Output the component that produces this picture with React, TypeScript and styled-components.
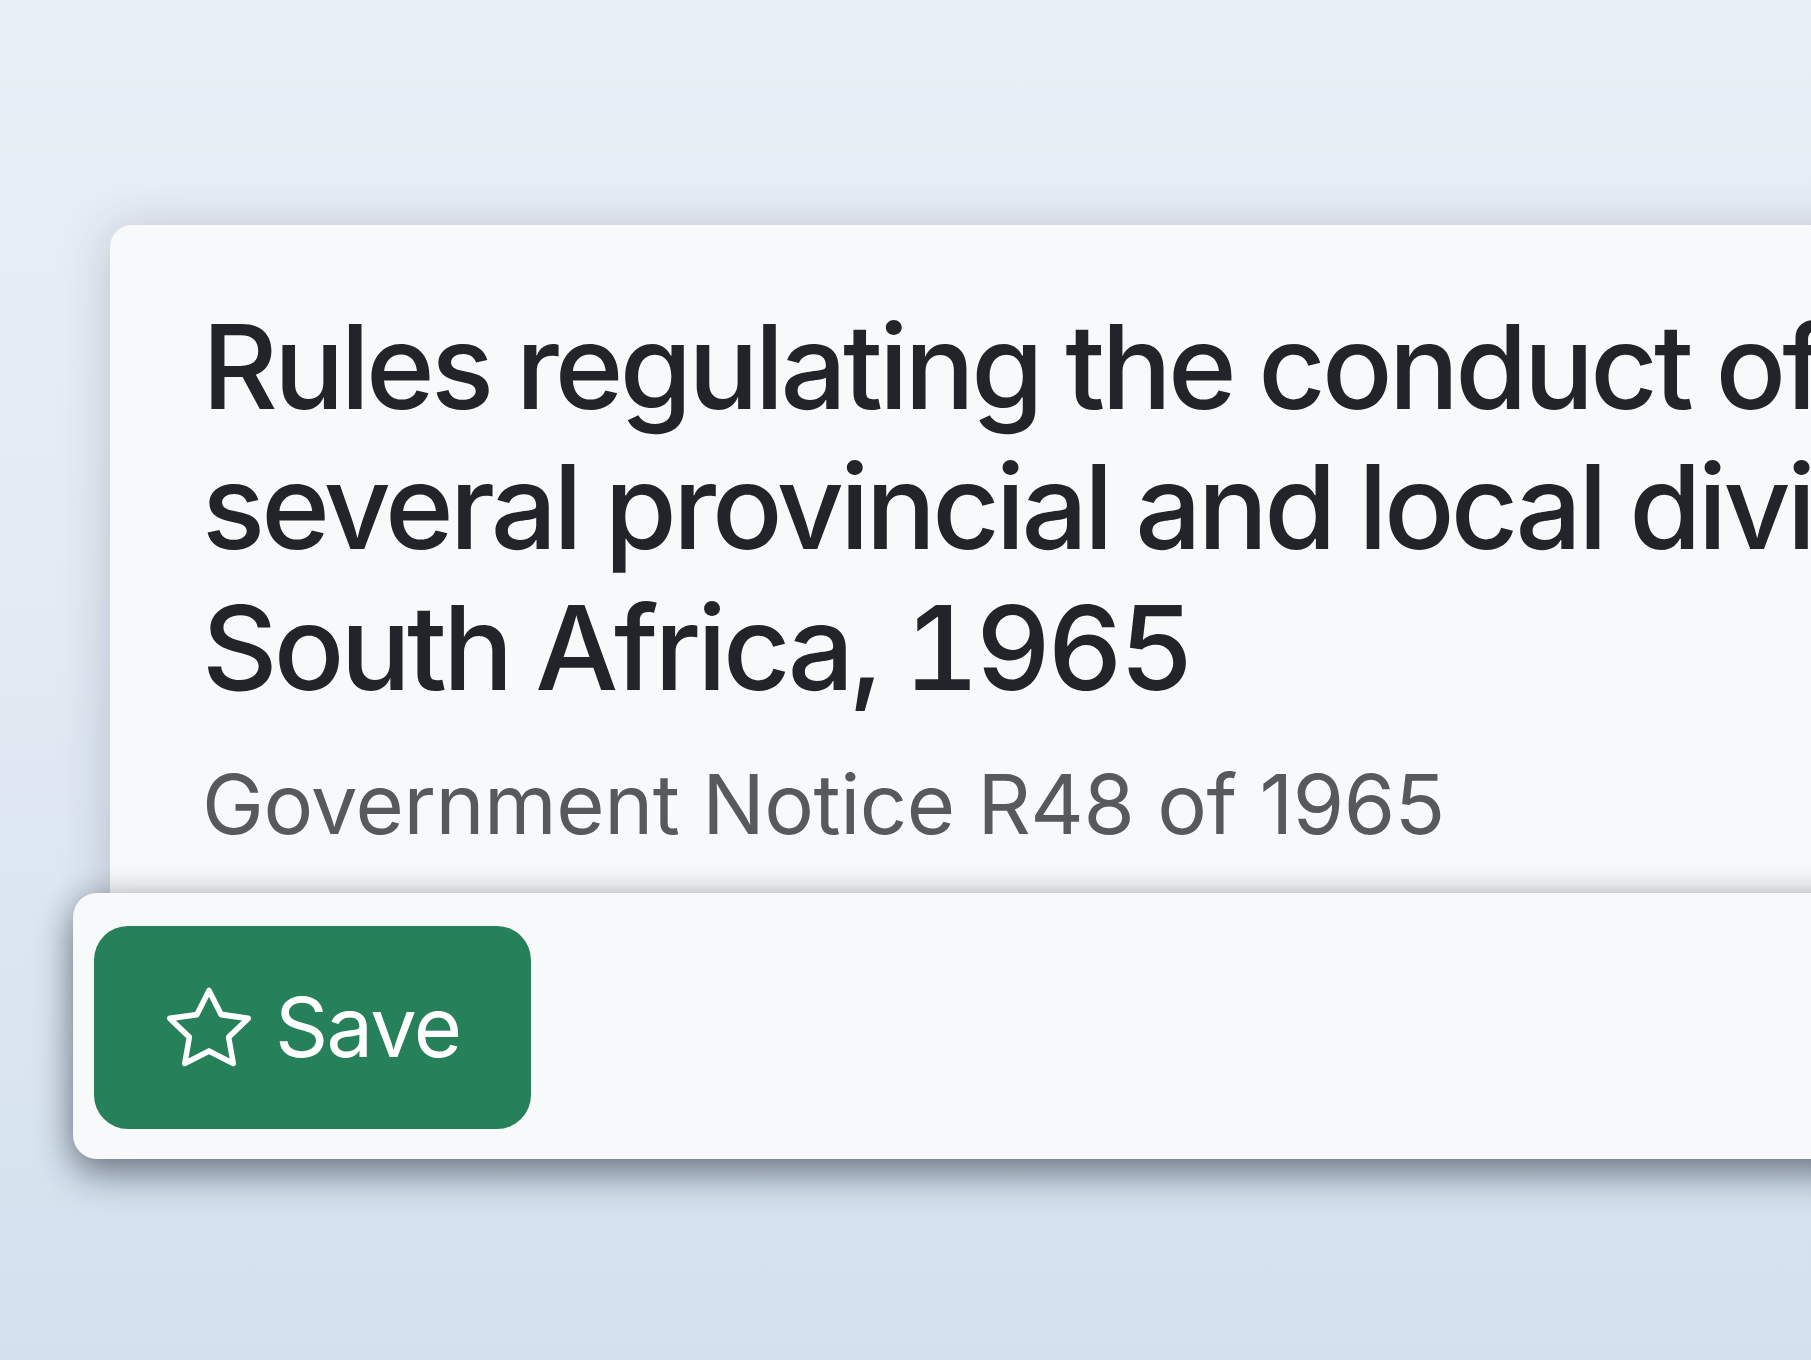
import React from "react";
import styled, { createGlobalStyle } from "styled-components";
import { BsStar } from "react-icons/bs";

const Global = createGlobalStyle`
  html, body { margin: 0; padding: 0; }
  body {
    width: 1811px;
    height: 1360px;
    overflow: hidden;
    background: linear-gradient(180deg, #e9eff7 0%, #e4ebf4 40%, #d3e1ee 100%);
    font-family: Inter, "Noto Sans", sans-serif;
  }
`;

const Page = styled.main`
  padding: 225px 0 0 110px;
  display: flex;
  flex-direction: column;
  align-items: flex-start;
`;

const Card = styled.section`
  width: 3300px;
  box-sizing: border-box;
  background: #f8f9fa;
  border-radius: 22px;
  padding: 72px 92px 54px;
  box-shadow: 0 4px 50px rgba(30, 45, 70, 0.22);
`;

const Title = styled.h1`
  margin: 0 0 24px;
  font-size: 117px;
  line-height: 1.2;
  font-weight: 500;
  letter-spacing: -0.033em;
  word-spacing: -2px;
  font-feature-settings: "tnum" 1;
  color: #212529;
`;

const TitleLine = styled.span`
  display: block;
  white-space: nowrap;
`;

const Subtitle = styled.p`
  margin: 0;
  font-size: 83px;
  line-height: 1.5;
  font-weight: 400;
  letter-spacing: -0.006em;
  color: #58595d;
  white-space: nowrap;
`;

const ActionBar = styled.div`
  position: relative;
  z-index: 1;
  width: 3400px;
  box-sizing: border-box;
  margin: -28px 0 0 -37px;
  padding: 33px 21px 30px;
  background: #f8f9fa;
  border-radius: 24px;
  box-shadow: 0 0 30px rgba(0, 0, 0, 0.16), 0 16px 38px rgba(20, 30, 45, 0.48);
  display: flex;
  align-items: center;
`;

const SaveButton = styled.button`
  display: inline-flex;
  align-items: center;
  gap: 24px;
  height: 203px;
  box-sizing: border-box;
  padding: 0 71px 0 73px;
  border: none;
  border-radius: 34px;
  background: #268059;
  color: #ffffff;
  font-family: Inter, "Noto Sans", sans-serif;
  font-size: 83px;
  line-height: 1.5;
  font-weight: 400;
  letter-spacing: -0.02em;
  cursor: pointer;

  svg {
    width: 84px;
    height: 84px;
    flex-shrink: 0;
  }
`;

export default function App() {
  return (
    <>
      <Global />
      <Page>
        <Card>
          <Title>
            <TitleLine>Rules regulating the conduct of the proceedings of the</TitleLine>
            <TitleLine>several provincial and local divisions of the Supreme Court of</TitleLine>
            <TitleLine>South Africa, 1965</TitleLine>
          </Title>
          <Subtitle>Government Notice R48 of 1965</Subtitle>
        </Card>
        <ActionBar>
          <SaveButton type="button">
            <BsStar />
            Save
          </SaveButton>
        </ActionBar>
      </Page>
    </>
  );
}
